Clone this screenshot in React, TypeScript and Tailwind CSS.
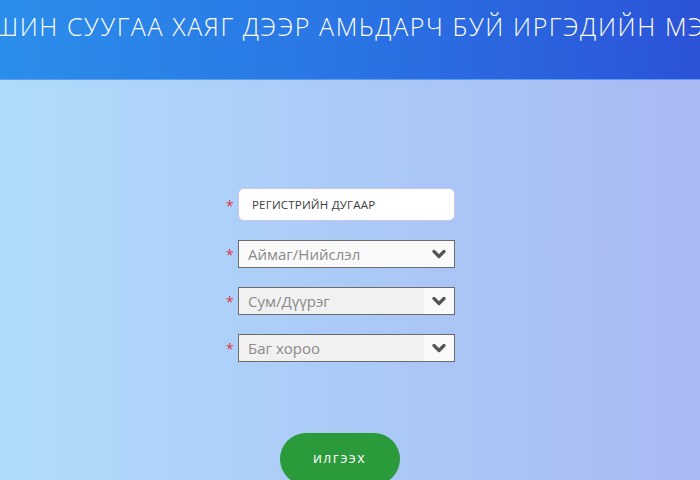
function Chevron() {
  return (
    <svg width="14" height="10" viewBox="0 0 14 10" fill="none">
      <path d="M2 2.5 L7 7.5 L12 2.5" stroke="#555" strokeWidth="3.2" strokeLinecap="round" strokeLinejoin="round" />
    </svg>
  )
}

function Req() {
  return <span className="w-[12px] text-[14px] leading-none text-[#e0394a] pt-[2px]">*</span>
}

function SelectBox({ label, disabled }: { label: string; disabled?: boolean }) {
  return (
    <div className="flex items-center">
      <Req />
      <div
        className={
          disabled
            ? 'flex h-[28px] w-[217px] items-stretch border border-[#6b6b6b] bg-[#f1f1f1]'
            : 'flex h-[28px] w-[217px] items-stretch border border-[#6b6b6b] bg-[#fafafa]'
        }
      >
        <span className="flex-1 pl-[9px] text-[15px] leading-[26px] text-[#8a8a8a]">{label}</span>
        <span
          className={
            disabled
              ? 'flex w-[30px] items-center justify-center bg-[#fafafa]'
              : 'flex w-[30px] items-center justify-center'
          }
        >
          <Chevron />
        </span>
      </div>
    </div>
  )
}

export default function App() {
  return (
    <div className="flex h-[480px] w-[700px] flex-col overflow-hidden font-['Open_Sans','Noto_Sans',sans-serif]">
      <header className="h-[80px] shrink-0 overflow-hidden border-b border-[#5a9cf0] bg-gradient-to-r from-[#2b8eea] via-[#2a74e4] to-[#2c52d8]">
        <h1 className="ml-[-44px] mt-[8px] whitespace-nowrap text-[25px] font-light tracking-[1.6px] text-white">
          ОРШИН СУУГАА ХАЯГ ДЭЭР АМЬДАРЧ БУЙ ИРГЭДИЙН МЭДЭЭЛЭЛ
        </h1>
      </header>
      <main className="flex flex-1 flex-col items-center bg-gradient-to-r from-[#afdcfb] via-[#abcaf6] to-[#a9b9f2] pt-[108px] pr-[19px]">
        <div className="flex flex-col gap-[19px]">
          <div className="flex items-center">
            <Req />
            <div className="flex h-[33px] w-[217px] items-center rounded-[6px] border border-[#c9c6f0] bg-white pl-[13px] text-[11.5px] font-medium tracking-[0.2px] text-[#3c3c3c]">
              РЕГИСТРИЙН ДУГААР
            </div>
          </div>
          <SelectBox label="Аймаг/Нийслэл" />
          <SelectBox label="Сум/Дүүрэг" disabled />
          <SelectBox label="Баг хороо" disabled />
        </div>
        <button className="mt-[71px] ml-[-2px] h-[52px] w-[120px] shrink-0 rounded-full bg-[#2b9a3b] pb-[4px] text-[14px] tracking-[1.5px] text-white">
          илгээх
        </button>
      </main>
    </div>
  )
}
